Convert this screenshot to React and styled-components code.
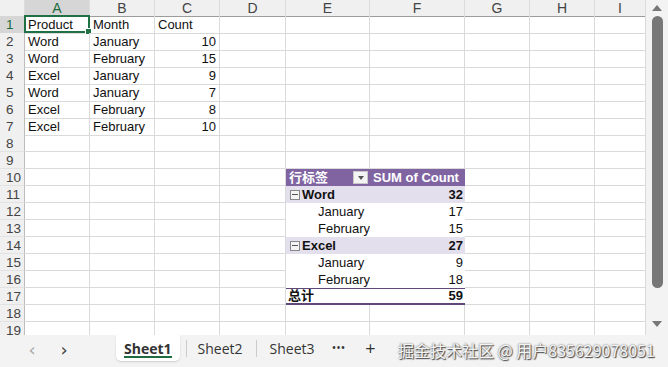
import styled, { createGlobalStyle, css } from "styled-components";

const GlobalStyle = createGlobalStyle`
  html, body { margin: 0; padding: 0; background: #f3f3f3; }
  body { font-family: "Liberation Sans", Arial, "Noto Sans CJK SC", sans-serif; }
`;

const COLS = [25, 65, 65, 65, 66, 84, 95, 65, 65, 51];
const LETTERS = ["A", "B", "C", "D", "E", "F", "G", "H", "I"];

const data = [
  ["Product", "Month", "Count"],
  ["Word", "January", 10],
  ["Word", "February", 15],
  ["Excel", "January", 9],
  ["Word", "January", 7],
  ["Excel", "February", 8],
  ["Excel", "February", 10],
];

// pivot rows keyed by sheet row number
const pivot = {
  10: { kind: "head" },
  11: { kind: "sub", label: "Word", value: 32 },
  12: { kind: "item", label: "January", value: 17 },
  13: { kind: "item", label: "February", value: 15 },
  14: { kind: "sub", label: "Excel", value: 27 },
  15: { kind: "item", label: "January", value: 9 },
  16: { kind: "item", label: "February", value: 18 },
  17: { kind: "total", label: "总计", value: 59 },
};

const Page = styled.div`
  width: 668px;
  height: 367px;
  display: flex;
  flex-direction: column;
  position: relative;
  overflow: hidden;
`;

const SheetArea = styled.div`
  height: 335px;
  display: flex;
  overflow: hidden;
  background: #fff;
`;

const Grid = styled.div`
  width: 646px;
  display: flex;
  flex-direction: column;
`;

const Row = styled.div`
  display: grid;
  grid-template-columns: ${COLS.map((c) => c + "px").join(" ")};
  height: ${(p) => (p.$head ? 16 : 17)}px;
  flex: none;
`;

const HeadCell = styled.div`
  background: ${(p) => (p.$active ? "#d6d6d6" : "#f0f0f0")};
  color: ${(p) => (p.$active ? "#1d6b3f" : "#444")};
  font-size: 14px;
  line-height: 16px;
  text-align: center;
  border-right: 1px solid #dcdcdc;
  border-bottom: 1px solid #9c9c9c;
  box-sizing: border-box;
`;

const RowNum = styled.div`
  background: ${(p) => (p.$active ? "#d6d6d6" : "#f0f0f0")};
  color: ${(p) => (p.$active ? "#1d6b3f" : "#444")};
  font-size: 13.5px;
  line-height: 17px;
  padding-left: 6px;
  border-right: 1px solid #bdbdbd;
  border-bottom: 1px solid #e2e2e2;
  box-sizing: border-box;
  overflow: hidden;
`;

const Cell = styled.div`
  position: relative;
  box-sizing: border-box;
  border-right: 1px solid #dadada;
  border-bottom: 1px solid #dadada;
  font-size: 13px;
  line-height: 16px;
  padding: 1px 3px 0;
  color: #111;
  white-space: nowrap;
  text-align: ${(p) => (p.$num ? "right" : "left")};
`;

const PivotCell = styled.div`
  box-sizing: border-box;
  font-size: 13px;
  line-height: 17px;
  padding: 0 2px;
  white-space: nowrap;
  display: flex;
  align-items: center;
  justify-content: ${(p) => (p.$num ? "flex-end" : "flex-start")};
  background: #fff;
  color: #111;
  ${(p) =>
    p.$kind === "head" &&
    css`
      background: #8064a2;
      color: #fff;
      font-weight: bold;
      justify-content: ${p.$num ? "flex-start" : "space-between"};
      padding-left: 3px;
    `}
  ${(p) =>
    p.$kind === "sub" &&
    css`
      background: #e4dfec;
      font-weight: bold;
    `}
  ${(p) =>
    p.$kind === "item" &&
    css`
      padding-left: ${p.$num ? "2px" : "32px"};
    `}
  ${(p) =>
    p.$kind === "total" &&
    css`
      font-weight: bold;
      border-top: 1px solid #60497a;
      border-bottom: 2px solid #60497a;
      line-height: 14px;
    `}
`;

const Selection = styled.div`
  position: absolute;
  inset: -1px -1px 0 -1px;
  border: 2px solid #1f7145;
  pointer-events: none;
  &::after {
    content: "";
    position: absolute;
    right: -4px;
    bottom: -4px;
    width: 5px;
    height: 5px;
    background: #1f7145;
    border: 1px solid #fff;
  }
`;

const DropBtn = styled.span`
  width: 15px;
  height: 13px;
  background: #f4f4f4;
  border: 1px solid #c8c8c8;
  box-sizing: border-box;
  display: flex;
  align-items: center;
  justify-content: center;
  &::after {
    content: "";
    border-left: 3.5px solid transparent;
    border-right: 3.5px solid transparent;
    border-top: 4px solid #555;
  }
`;

const Collapse = styled.span`
  width: 8px;
  height: 8px;
  border: 1px solid #888;
  margin: 0 2px 0 2px;
  position: relative;
  flex: none;
  background: #f4f4f4;
  &::after {
    content: "";
    position: absolute;
    left: 1px;
    right: 1px;
    top: 3.5px;
    height: 1px;
    background: #555;
  }
`;

const ScrollBar = styled.div`
  flex: 1;
  background: #f3f3f3;
  display: flex;
  flex-direction: column;
  align-items: center;
  padding-top: 5px;
`;

const Arrow = styled.span`
  width: 0;
  height: 0;
  border-left: 5px solid transparent;
  border-right: 5px solid transparent;
  ${(p) =>
    p.$down
      ? css`border-top: 6px solid #777;`
      : css`border-bottom: 6px solid #777;`}
`;

const Thumb = styled.div`
  width: 11px;
  height: 272px;
  margin: 5px 0 33px;
  background: #777;
  border-radius: 6px;
`;

const TabBar = styled.div`
  flex: 1;
  display: flex;
  align-items: flex-start;
  background: #f3f3f3;
  font-family: "Open Sans", "Liberation Sans", sans-serif;
`;

const NavBtn = styled.span`
  width: 32px;
  text-align: center;
  font-size: 18px;
  line-height: 30px;
  color: ${(p) => (p.$dim ? "#aaa" : "#444")};
  font-family: "DejaVu Sans", sans-serif;
`;

const Tab = styled.div`
  height: 26px;
  padding: 0 8px;
  margin-left: ${(p) => p.$ml || 0}px;
  display: flex;
  align-items: center;
  font-size: 14px;
  color: #333;
  position: relative;
  ${(p) =>
    p.$active &&
    css`
      background: #fff;
      font-weight: bold;
      border-radius: 0 0 5px 5px;
      box-shadow: 0 1px 2px rgba(0, 0, 0, 0.15);
      &::after {
        content: "";
        position: absolute;
        left: 8px;
        right: 8px;
        bottom: 3px;
        height: 2px;
        background: #1d6b3f;
      }
    `}
`;

const Sep = styled.span`
  width: 1px;
  height: 17px;
  margin-top: 5px;
  margin-left: ${(p) => p.$ml}px;
  background: #ccc;
`;

const Tool = styled.span`
  width: 32px;
  text-align: center;
  line-height: 26px;
  font-size: ${(p) => p.$size || 14}px;
  color: #333;
`;

const Watermark = styled.div`
  position: absolute;
  left: 398px;
  top: 338px;
  font-size: 16px;
  font-family: "Noto Sans CJK SC", sans-serif;
  color: #f4f4f4;
  text-shadow: 0 0 2px #555, 1px 1px 1px #444;
  white-space: nowrap;
`;

function sheetRow(r) {
  const cells = [];
  const src = data[r - 1];
  for (let c = 0; c < 9; c++) {
    const p = pivot[r];
    if (p && c === 4) {
      cells.push(
        <PivotCell key={c} $kind={p.kind}>
          {p.kind === "head" ? (
            <>
              <span>行标签</span>
              <DropBtn />
            </>
          ) : (
            <>
              {p.kind === "sub" && <Collapse />}
              {p.label}
            </>
          )}
        </PivotCell>
      );
      continue;
    }
    if (p && c === 5) {
      cells.push(
        <PivotCell key={c} $kind={p.kind} $num>
          {p.kind === "head" ? "SUM of Count" : p.value}
        </PivotCell>
      );
      continue;
    }
    const v = src && c < 3 ? src[c] : "";
    cells.push(
      <Cell key={c} $num={typeof v === "number"}>
        {v}
        {r === 1 && c === 0 && <Selection />}
      </Cell>
    );
  }
  return cells;
}

const App = () => {
  const rows = [];
  for (let r = 1; r <= 19; r++) rows.push(r);
  return (
    <Page>
      <GlobalStyle />
      <SheetArea>
        <Grid>
          <Row $head>
            <HeadCell />
            {LETTERS.map((l, i) => (
              <HeadCell key={l} $active={i === 0}>
                {l}
              </HeadCell>
            ))}
          </Row>
          {rows.map((r) => (
            <Row key={r}>
              <RowNum $active={r === 1}>{r}</RowNum>
              {sheetRow(r)}
            </Row>
          ))}
        </Grid>
        <ScrollBar>
          <Arrow />
          <Thumb />
          <Arrow $down />
        </ScrollBar>
      </SheetArea>
      <TabBar>
        <NavBtn $dim style={{ marginLeft: 16 }}>‹</NavBtn>
        <NavBtn>›</NavBtn>
        <Tab $active $ml={36}>Sheet1</Tab>
        <Sep $ml={6} />
        <Tab $ml={3}>Sheet2</Tab>
        <Sep $ml={5} />
        <Tab $ml={5}>Sheet3</Tab>
        <Tool $size={12}>•••</Tool>
        <Tool $size={18}>+</Tool>
      </TabBar>
      <Watermark>掘金技术社区 @ 用户835629078051</Watermark>
    </Page>
  );
};

export default App;
